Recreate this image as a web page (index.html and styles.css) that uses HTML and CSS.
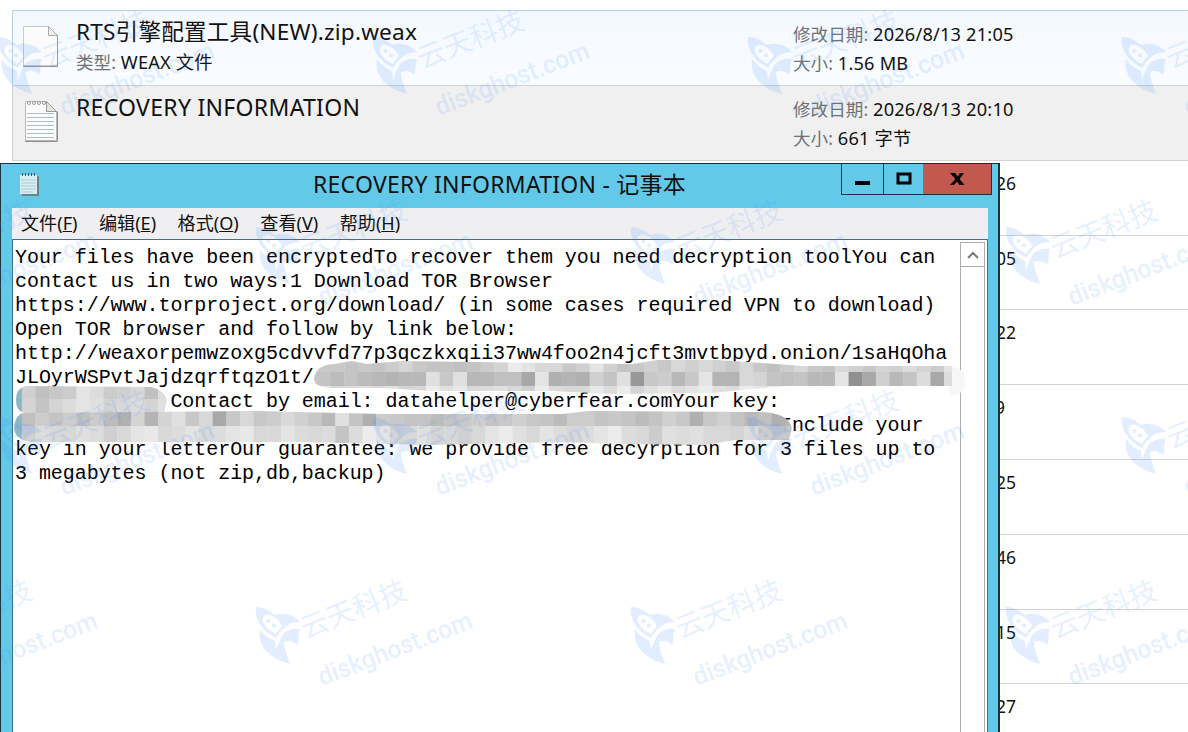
FILE: index.html
```html
<!doctype html>
<html lang="zh-CN">
    <head>
        <meta charset="utf-8">
        <title>RECOVERY INFORMATION - 记事本</title>
        <link rel="stylesheet" href="styles.css">
    </head>
    <body>
        <div class="explorer">
            <div class="file file--hover">
                <svg class="file-icon" width="38" height="46" viewBox="0 0 38 46">
                    <path d="M2.5 3.500h25l9 9v30h-34z" fill="#fbfbfb" stroke="#c6cacd"/>
                    <path d="M2 43.500h35M36.500 13v30" stroke="#999" fill="none"/>
                    <path d="M27.500 3.500v9h9z" fill="#eee" stroke="#aaa"/>
                </svg>
                <div class="file-main">
                    <div class="file-name file-name--zip">RTS引擎配置工具(NEW).zip.weax</div>
                    <div class="meta"><span>类型:</span> WEAX 文件</div>
                </div>
                <div class="file-side">
                    <div class="meta"><span>修改日期:</span> 2026/8/13 21:05</div>
                    <div class="meta"><span>大小:</span> 1.56 MB</div>
                </div>
            </div>
            <div class="file file--selected">
                <svg class="file-icon" width="38" height="46" viewBox="0 0 38 46">
                    <path d="M4.500 3.500h21l10 10v29h-31z" fill="#fcfcfc" stroke="#b8b8b8"/>
                    <path d="M4 43.500h32.500v-30" stroke="#8e8e8e" fill="none"/>
                    <path d="M25.500 3.500v10h10z" fill="#e4e4e4" stroke="#999"/>
                    <path d="M6 15.500h27M6 19.500h27M6 23.500h27M6 27.500h27M6 31.500h27M6 35.500h27M6 39.500h27" stroke="#aebfcb"/>
                    <g fill="#fff" stroke="#999"><circle cx="8" cy="5" r="1.500"/><circle cx="13" cy="5" r="1.500"/><circle cx="18" cy="5" r="1.500"/><circle cx="23" cy="5" r="1.500"/></g>
                </svg>
                <div class="file-main">
                    <div class="file-name">RECOVERY INFORMATION</div>
                </div>
                <div class="file-side">
                    <div class="meta"><span>修改日期:</span> 2026/8/13 20:10</div>
                    <div class="meta"><span>大小:</span> 661 字节</div>
                </div>
            </div>
            <div class="file file--behind">26</div>
            <div class="file file--behind">05</div>
            <div class="file file--behind">22</div>
            <div class="file file--behind file--short">9</div>
            <div class="file file--behind">25</div>
            <div class="file file--behind">46</div>
            <div class="file file--behind">15</div>
            <div class="file file--behind">27</div>
        </div>

        <div class="window">
            <div class="titlebar">
                <svg class="app-icon" width="22" height="26" viewBox="0 0 22 26">
                    <path d="M3 3h15l2 2v19H3z" fill="#6a8288"/>
                    <path d="M1 3h17v19H1z" fill="#d8eef3"/>
                    <path d="M2 8h15M2 11h15M2 14h15M2 17h15M2 20h12" stroke="#a9cbd5"/>
                    <path d="M3.500 1v3M6.500 1v3M9.500 1v3M12.500 1v3M15.500 1v3" stroke="#456"/>
                </svg>
                <div class="title">RECOVERY INFORMATION - 记事本</div>
                <div class="caption">
                    <div class="caption-btn caption-btn--min"><svg width="16" height="16"><path d="M0 10h15v4H0z"/></svg></div>
                    <div class="caption-btn caption-btn--max"><svg width="16" height="14"><path d="M2 2h12v9H2z" fill="none" stroke="#000" stroke-width="3"/></svg></div>
                    <div class="caption-btn caption-btn--close"><svg width="16" height="14"><path d="M1 1h5l3 3.500L11 1h4l-4.500 6 5 6h-5L8 9.500 5 13H1l5.500-6z"/></svg></div>
                </div>
            </div>
            <div class="menubar">
                <div>文件(<u>F</u>)</div>
                <div>编辑(<u>E</u>)</div>
                <div>格式(<u>O</u>)</div>
                <div>查看(<u>V</u>)</div>
                <div>帮助(<u>H</u>)</div>
            </div>
            <div class="editor">
<pre class="note">Your files have been encryptedTo recover them you need decryption toolYou can
contact us in two ways:1 Download TOR Browser
https://www.torproject.org/download/ (in some cases required VPN to download)
Open TOR browser and follow by link below:
http://weaxorpemwzoxg5cdvvfd77p3qczkxqii37ww4foo2n4jcft3mvtbpyd.onion/1saHqOha
JLOyrWSPvtJajdzqrftqzO1t/
             Contact by email: datahelper@cyberfear.comYour key:
                                                                Include your
key in your letterOur guarantee: we provide free decyrption for 3 files up to
3 megabytes (not zip,db,backup)</pre>
                <div class="scrollbar">
                    <div class="scroll-up"><svg width="14" height="10"><path d="M2 8l5-5 5 5" fill="none" stroke="#777" stroke-width="2"/></svg></div>
                </div>
            </div>
        </div>

        <svg class="redaction" width="1188" height="732">
            <defs>
                <clipPath id="smear-a"><path d="M314 378q2-13 20-14l18-3 15 3 35-3 230 3 25-4 60 0 45 3 40 3h150v20H792l-40 3-40 4-100 1-60-3-120 0-50-3-53 0q-16-2-15-10z"/></clipPath>
                <clipPath id="smear-b"><path d="M16 400q0-12 10-14l125 1q14 3 16 14l-3 12H24q-8-2-8-13z"/></clipPath>
                <clipPath id="smear-c"><path d="M14 428q1-13 9-15l230-2 130 3 180 0 25-3 170 1q30 0 34 16l-3 12H735l-30 5-85-1-60-2-130 3-130-3H32q-17-2-18-14z"/></clipPath>
            </defs>
            <path d="M945 366q20 0 20 15t-15 14z" fill="#f6f6f6"/>
            <g id="mosaic"></g>
        </svg>

        <svg class="watermark" width="1188" height="732">
            <defs>
                <g id="mark">
                    <path fill-rule="evenodd" d="M1 0C9 0 15 4 20 8c8-3 18-1 25 7-9 0-15 3-23 14v2C9 26-1 13 1 0zM9 9c-4 4 1 13 12 18 2-4 4-6 6-8C23 11 14 5 9 9z"/>
                    <path d="M5 22c4 6 9 9 15 12l1 9c2-6 4-11 7-16 4-4 10-6 17-5-3 6 0 10-3 16-4-4-8-5-13-3 0 7 3 13 6 22C16 52 2 40 5 22z"/>
                    <circle cx="13.500" cy="14" r="2.100"/><circle cx="19" cy="18.500" r="2.100"/>
                    <text class="mark-cn" transform="translate(50 32) rotate(-21.500)" textLength="112">云天科技</text>
                    <text class="mark-en" transform="translate(67 79) rotate(-21)" textLength="163" lengthAdjust="spacingAndGlyphs">diskghost.com</text>
                </g>
            </defs>
            <use href="#mark" x="-3" y="37"/><use href="#mark" x="372" y="37"/><use href="#mark" x="747" y="37"/><use href="#mark" x="1121" y="37"/>
            <use href="#mark" x="-120" y="227"/><use href="#mark" x="255" y="227"/><use href="#mark" x="630" y="227"/><use href="#mark" x="1005" y="227"/>
            <use href="#mark" x="-3" y="417"/><use href="#mark" x="372" y="417"/><use href="#mark" x="747" y="417"/><use href="#mark" x="1121" y="417"/>
            <use href="#mark" x="-120" y="607"/><use href="#mark" x="255" y="607"/><use href="#mark" x="630" y="607"/><use href="#mark" x="1005" y="607"/>
        </svg>

        <script>
            // each row: clip, left, top, height, grey level of every cell
            var rows = [
                ['a', 303.4, 358, 14, 'c8 c8 c8 c4 c8 c4 cc d4 c8 c4 c4 c0 c4 cc d4 ec e4 d8 d8 c8 d0 e4 d0 c4 c8 d0 c8 d8 d0 d8 d0 c8 d8 c8 c0 cc d8 c8 c4 d8 d0 c8 d4 d0 dc d4 cc e4'],
                ['a', 303.4, 372, 14, 'c8 c4 bc c4 bc b8 b4 b8 b8 e0 c8 e0 b8 b8 c0 c0 a8 e4 b0 b4 b0 d0 c4 e0 98 c8 cc b8 c8 e4 b4 b4 d8 d4 c4 c0 c4 b8 b8 e4 90 a8 d0 b8 c4 dc a8 dc'],
                ['a', 303.4, 386, 12, 'e8 e8 d8 dc e0 d8 e0 d4 d8 ec e0 e8 d8 dc e0 d8 d0 ec dc d8 d8 e8 dc ec d4 e0 e8 dc e4 ec e0 dc ec e4 ec f0 f4 f4 f4 f4 f4 f4 f4 f4 f4 f4 f4 f4'],
                ['b', 8.2, 384, 15, 'c0 d0 c0 c8 cc e4 dc cc d0 d8 c0 dc e8'],
                ['b', 8.2, 399, 15, 'c0 d4 c4 d4 dc e4 e0 d4 d8 dc d4 e0 f0'],
                ['c', 8.2, 410, 16, 'b8 c0 cc c4 cc c0 cc bc b0 d4 b4 d4 e0 c8 d8 a8 c8 d8 c8 cc d8 d0 c8 b8 e0 c4 b0 cc c8 c4 c4 bc c4 c8 d0 c4 c8 d0 c8 c4 bc cc cc c4 c8 c4 bc c4 d0 c8 b0 c8 d0 c4 b8 c0 b0 b8 c8'],
                ['c', 8.2, 426, 20, 'c8 d0 dc d8 d8 e0 dc d0 d8 e4 e8 d8 dc e4 d8 dc e4 e8 d8 d8 e4 dc d8 dc c4 dc ec e4 d4 d8 e0 d4 d8 d0 d8 e4 ec e0 d8 e4 dc d8 dc e4 ec dc d8 cc e0 dc e0 d8 d8 d4 dc cc c8 c8 d0']
            ];
            var mosaic = document.getElementById('mosaic');

            rows.forEach(function(row) {
                var g = document.createElementNS('http://www.w3.org/2000/svg', 'g');
                g.setAttribute('clip-path', 'url(#smear-' + row[0] + ')');
                row[4].split(' ').forEach(function(level, i) {
                    var cell = document.createElementNS('http://www.w3.org/2000/svg', 'rect');
                    cell.setAttribute('x', row[1] + i * 13.63);
                    cell.setAttribute('y', row[2]);
                    cell.setAttribute('width', 14);
                    cell.setAttribute('height', row[3]);
                    cell.setAttribute('fill', row[0] != 'a' && i == 0 ? '#8db6c6' : '#' + level + level + level);
                    g.appendChild(cell);
                });
                mosaic.appendChild(g);
            });
        </script>
    </body>
</html>
```

FILE: styles.css
```css
body {
    margin: 0;
    width: 1188px;
    height: 732px;
    overflow: hidden;
    position: relative;
    background: #fff;
    color: #111;
    font-family: "Noto Sans", "Noto Sans CJK SC", sans-serif;
}
.explorer {
    padding: 10px 0 0 12px;
}
.file {
    box-sizing: border-box;
    display: flex;
    height: 74.8px;
    border-bottom: 1px solid #d3d3d3;
}
.file--hover {
    height: 76px;
    border: 1px solid #b7d0ea;
    border-right: 0;
    border-bottom-color: #ccd3da;
    background: linear-gradient(#f4f9ff, #f9fcff);
}
.file--selected {
    border-left: 1px solid #d0d0d0;
    background: #f0f0f0;
}
.file--behind {
    width: 1176px;
    padding: 10px 0 0 984px;
    font-size: 17.5px;
    line-height: 24px;
}
.file--short {
    padding-left: 983px;
}
.file-icon {
    margin: 12px 0 0 8px;
}
.file-main {
    width: 717px;
    padding: 5px 0 0 17px;
}
.file-side {
    padding-top: 9px;
}
.file-name {
    font-size: 23px;
    line-height: 32px;
    letter-spacing: 0.3px;
    white-space: nowrap;
}
.file-name--zip {
    font-size: 22.6px;
    letter-spacing: 0.2px;
}
.meta {
    font-size: 18.2px;
    line-height: 29px;
    letter-spacing: 0.2px;
    white-space: nowrap;
}
.meta span {
    color: #6d7278;
    font-size: 17.6px;
    letter-spacing: 0;
}
.window {
    position: absolute;
    left: 0;
    top: 163px;
    box-sizing: border-box;
    width: 1000px;
    height: 580px;
    padding: 0 10px 0 11px;
    border: 1px solid #17353f;
    border-right-width: 2px;
    background: #63c9e8;
}
.titlebar {
    display: flex;
    height: 44px;
}
.app-icon {
    margin: 8px 0 0 7px;
}
.title {
    flex: 1;
    padding-left: 272px;
    font-size: 23px;
    line-height: 41px;
    letter-spacing: 0.25px;
    white-space: nowrap;
}
.caption {
    display: flex;
    height: 30px;
    margin-right: -4px;
    border: 1px solid #17353f;
    border-top: 0;
}
.caption-btn {
    box-sizing: border-box;
    display: flex;
    align-items: center;
    justify-content: center;
    width: 41px;
}
.caption-btn--max {
    width: 40px;
    border-left: 1px solid #17353f;
}
.caption-btn--close {
    width: 68px;
    background: #c1594f;
}
.menubar {
    display: flex;
    gap: 21.5px;
    height: 31px;
    padding-left: 9px;
    background: #efeff1;
    font-size: 18.1px;
    line-height: 30px;
}
.editor {
    display: flex;
    justify-content: space-between;
    height: 520px;
    border: 1px solid #3f7189;
    background: #fff;
}
.note {
    margin: 0;
    padding: 6px 0 0 2px;
    font: 20px/24px "Liberation Mono", monospace;
    letter-spacing: -0.05px;
    color: #000;
}
.scrollbar {
    width: 23px;
    margin: 2px 2px 0 0;
    border: 1px solid #adadad;
}
.scroll-up {
    display: flex;
    align-items: center;
    justify-content: center;
    height: 23px;
    border-bottom: 1px solid #adadad;
}
.redaction,
.watermark {
    position: absolute;
    left: 0;
    top: 0;
}
.watermark {
    fill: rgba(60, 140, 255, 0.15);
}
.mark-cn {
    font: 400 28px "Noto Sans CJK SC", sans-serif;
}
.mark-en {
    font: 500 26px Roboto, sans-serif;
}
```
